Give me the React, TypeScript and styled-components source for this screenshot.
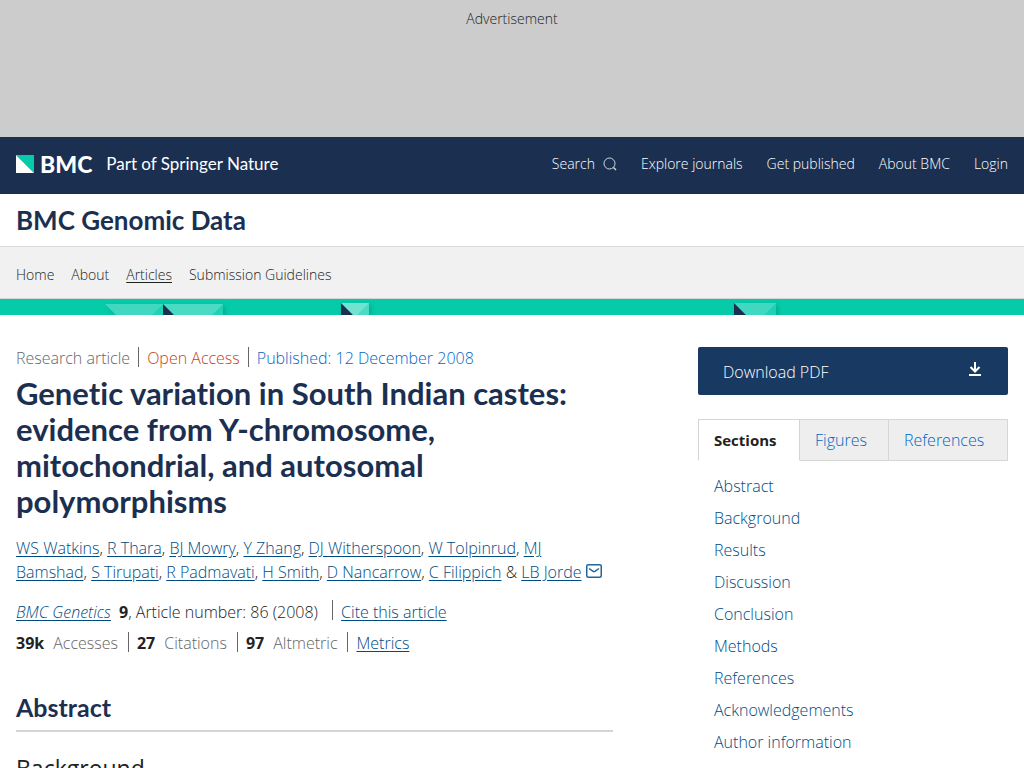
import React from "react";
import styled, { createGlobalStyle } from "styled-components";

const GlobalStyle = createGlobalStyle`
  *, *::before, *::after { box-sizing: border-box; }
  body {
    margin: 0;
    background: #fff;
    color: #222;
    font-family: "Open Sans", "Noto Sans", sans-serif;
    font-weight: 300;
    font-size: 16px;
    line-height: 24px;
  }
  b { font-weight: 700; }
  h1, h2, h3, p, ul { margin: 0; padding: 0; }
  ul { list-style: none; }
`;

const headingFont = `Lato, "Open Sans", sans-serif`;

const Page = styled.div`
  height: 100vh;
  overflow: hidden;
`;

const Advert = styled.aside`
  height: 137px;
  padding-top: 7px;
  background: #ccc;
  text-align: center;
  font-size: 14px;
`;

const Header = styled.header`
  display: flex;
  align-items: center;
  justify-content: space-between;
  height: 57px;
  padding: 0 16px 4px;
  background: #1b3051;
`;

const Brand = styled.a`
  display: flex;
  align-items: center;
  color: #fff;
  font-family: ${headingFont};
  text-decoration: none;
`;

const BrandName = styled.span`
  margin: 0 14px 0 6px;
  font-size: 23px;
  font-weight: 900;
`;

const BrandNote = styled.span`
  font-size: 17px;
  font-weight: 400;
`;

const LinkRow = styled.ul<{ $gap: number }>`
  display: flex;
  gap: ${(p) => p.$gap}px;
  font-size: 14px;
`;

const BarLink = styled.a<{ $dark?: boolean; $current?: boolean }>`
  display: flex;
  align-items: center;
  gap: 8px;
  color: ${(p) => (p.$dark ? "#fff" : "#222")};
  text-decoration: ${(p) => (p.$current ? "underline" : "none")};
  text-underline-offset: 2px;
`;

const JournalBar = styled.div`
  height: 53px;
  padding: 10px 16px;
  border-bottom: 1px solid #d9d9d9;
`;

const JournalTitle = styled.p`
  color: #1b3051;
  font: 700 26px/32px ${headingFont};
`;

const JournalNav = styled.nav`
  height: 52px;
  padding: 16px 16px 0;
  background: #f1f1f1;
  border-bottom: 1px solid #d5d5d5;
`;

const Pattern = styled.div`
  height: 16px;
  overflow: hidden;
  background: #05cba9;

  svg { display: block; }
`;

const Content = styled.div`
  display: grid;
  grid-template-columns: minmax(0, 1fr) 310px;
  column-gap: 85px;
  padding: 32px 16px;
`;

const DividedList = styled.ul<{ $gap: number }>`
  display: flex;
  height: 20px;
  color: #666;
  line-height: 22px;

  li + li {
    margin-left: ${(p) => p.$gap}px;
    padding-left: 8px;
    border-left: 1px solid #666;
  }
`;

const Tinted = styled.span<{ $color: string }>`
  color: ${(p) => p.$color};
`;

const PlainLink = styled.a`
  color: #0067c5;
  text-decoration: none;
`;

const Title = styled.h1`
  margin: 8px 0 17px;
  color: #1b3051;
  font: 700 31px/36px ${headingFont};
  font-variant-ligatures: none;
`;

const TextLink = styled.a`
  color: #004b83;
  text-decoration: underline;
  text-underline-offset: 2px;

  svg { margin-left: 4px; }
`;

const Authors = styled.p`
  margin-bottom: 16px;
`;

const Citation = styled.p`
  margin-bottom: 8px;

  b { margin-left: 4px; }
`;

const Cite = styled.span`
  display: inline-block;
  height: 20px;
  margin-left: 10px;
  padding-left: 8px;
  border-left: 1px solid #666;
  line-height: 24px;
  vertical-align: top;
`;

const Metrics = styled(DividedList)`
  b {
    margin-right: 9px;
    color: #222;
  }
`;

const SectionTitle = styled.h2`
  margin: 40px 0 22px;
  padding-bottom: 8px;
  border-bottom: 2px solid #d5d5d5;
  color: #1b3051;
  font: 700 25px/30px ${headingFont};
`;

const SubTitle = styled.h3`
  font-size: 23px;
  font-weight: 400;
  line-height: 28px;
`;

const Download = styled.a`
  display: flex;
  align-items: center;
  justify-content: space-between;
  height: 48px;
  margin-bottom: 24px;
  padding: 2px 25px 0;
  border-radius: 2px;
  background: #183962;
  color: #fff;
  text-decoration: none;

  svg { margin-bottom: 6px; }
`;

const Tabs = styled.div`
  display: grid;
  grid-template-columns: 102px 89px 1fr;
  height: 42px;
  margin-bottom: 13px;
`;

const Tab = styled.button<{ $active?: boolean }>`
  padding: 0 15px;
  border: 1px solid #d5d5d5;
  border-left-width: ${(p) => (p.$active ? "1px" : "0")};
  border-bottom-color: ${(p) => (p.$active ? "#fff" : "#d5d5d5")};
  background: ${(p) => (p.$active ? "#fff" : "#eee")};
  color: ${(p) => (p.$active ? "#222" : "#0067c5")};
  font: inherit;
  font-size: ${(p) => (p.$active ? 15 : 16)}px;
  font-weight: ${(p) => (p.$active ? 700 : 300)};
  text-align: left;
`;

const Contents = styled.ul`
  padding-left: 16px;

  li { height: 32px; }
`;

const ContentsLink = styled.a`
  color: #004b83;
  text-decoration: none;
`;

const authors = [
  "WS Watkins", "R Thara", "BJ Mowry", "Y Zhang", "DJ Witherspoon", "W Tolpinrud", "MJ Bamshad",
  "S Tirupati", "R Padmavati", "H Smith", "D Nancarrow", "C Filippich",
];

const sections = [
  "Abstract", "Background", "Results", "Discussion", "Conclusion", "Methods", "References",
  "Acknowledgements", "Author information",
];

const journalPages = ["Home", "About", "Articles", "Submission Guidelines"];
const siteLinks = ["Explore journals", "Get published", "About BMC", "Login"];

const BrandMark = () => (
  <svg width="18" height="18" viewBox="0 0 18 18" aria-hidden="true">
    <path fill="#05cba9" d="M0 0h18v18z" />
    <path fill="#fff" d="M0 0v18h18z" />
  </svg>
);

const SearchIcon = () => (
  <svg width="14" height="14" viewBox="0 0 14 14" fill="none" stroke="#d5dae2" aria-hidden="true">
    <circle cx="6.5" cy="6.5" r="5.5" />
    <path d="M10.5 10.5 13 13" strokeWidth="1.4" />
  </svg>
);

const MailIcon = () => (
  <svg width="16" height="14" viewBox="0 0 16 14" fill="none" stroke="#22659a" strokeWidth="1.5" aria-hidden="true">
    <rect x="0.75" y="0.75" width="14.5" height="12.5" rx="1.5" />
    <path d="M3 4.5 6.8 7.2q1.2.8 2.4 0L13 4.5" />
  </svg>
);

const DownloadIcon = () => (
  <svg width="16" height="16" viewBox="0 0 16 16" fill="none" stroke="#fff" strokeWidth="2" aria-hidden="true">
    <path d="M8 1v9M3.5 6 8 10.5 12.5 6M2 14h12" />
  </svg>
);

const Triangles = () => (
  <svg width="1024" height="16" viewBox="0 0 1024 16" aria-hidden="true">
    <defs>
      <filter id="shade" x="-20%" y="-50%" width="140%" height="200%">
        <feDropShadow dx="2" dy="2" stdDeviation="2" floodColor="#036b5a" floodOpacity="0.35" />
      </filter>
    </defs>
    <g filter="url(#shade)">
      <path fill="#40d8c0" d="M105 5h58v12h-46z" />
      <path fill="#4bdbc4" d="M163 5h60v12h-60z" />
      <path fill="#70e3d1" d="M341 4h28v12h-28z" />
      <path fill="#40d8c0" d="M734 4h42v12h-42z" />
    </g>
    <path fill="#21d1b3" d="M163 5v11h-11z" />
    <path fill="#21d1b3" d="M223 5v11h-11z" />
    <path fill="#4bdbc4" d="M369 4v12h-12z" />
    <path fill="#21d1b3" d="M776 4v12h-12z" />
    <path fill="#1b3051" d="M163 5v11h11zM341 4v12h12zM734 4v12h12z" />
  </svg>
);

export default function App() {
  return (
    <Page>
      <GlobalStyle />
      <Advert>Advertisement</Advert>
      <Header>
        <Brand href="#">
          <BrandMark />
          <BrandName>BMC</BrandName>
          <BrandNote>Part of Springer Nature</BrandNote>
        </Brand>
        <nav aria-label="Site">
          <LinkRow $gap={24}>
            <li><BarLink $dark href="#">Search <SearchIcon /></BarLink></li>
            {siteLinks.map((label) => (
              <li key={label}><BarLink $dark href="#">{label}</BarLink></li>
            ))}
          </LinkRow>
        </nav>
      </Header>
      <JournalBar>
        <JournalTitle>BMC Genomic Data</JournalTitle>
      </JournalBar>
      <JournalNav aria-label="Journal">
        <LinkRow $gap={17}>
          {journalPages.map((label) => (
            <li key={label}><BarLink href="#" $current={label === "Articles"}>{label}</BarLink></li>
          ))}
        </LinkRow>
      </JournalNav>
      <Pattern><Triangles /></Pattern>
      <Content>
        <main>
          <DividedList $gap={8}>
            <li>Research article</li>
            <li><Tinted $color="#c74413">Open Access</Tinted></li>
            <li><PlainLink href="#">Published: 12 December 2008</PlainLink></li>
          </DividedList>
          <Title>
            Genetic variation in South Indian castes: evidence from Y-chromosome, mitochondrial, and
            autosomal polymorphisms
          </Title>
          <Authors>
            {authors.map((name, i) => (
              <React.Fragment key={name}>
                <TextLink href="#">{name}</TextLink>
                {i < authors.length - 1 ? ", " : " & "}
              </React.Fragment>
            ))}
            <TextLink href="#">LB Jorde</TextLink>
            <TextLink href="#" aria-label="Email LB Jorde"><MailIcon /></TextLink>
          </Authors>
          <Citation>
            <TextLink href="#"><i>BMC Genetics</i></TextLink> <b>9</b>, Article number: 86 (2008){" "}
            <Cite><TextLink href="#">Cite this article</TextLink></Cite>
          </Citation>
          <Metrics $gap={10}>
            <li><b>39k</b>Accesses</li>
            <li><b>27</b>Citations</li>
            <li><b>97</b>Altmetric</li>
            <li><TextLink href="#">Metrics</TextLink></li>
          </Metrics>
          <SectionTitle>Abstract</SectionTitle>
          <SubTitle>Background</SubTitle>
        </main>
        <aside>
          <Download href="#">Download PDF <DownloadIcon /></Download>
          <Tabs role="tablist">
            <Tab role="tab" aria-selected="true" $active>Sections</Tab>
            <Tab role="tab" aria-selected="false">Figures</Tab>
            <Tab role="tab" aria-selected="false">References</Tab>
          </Tabs>
          <Contents>
            {sections.map((label) => (
              <li key={label}><ContentsLink href="#">{label}</ContentsLink></li>
            ))}
          </Contents>
        </aside>
      </Content>
    </Page>
  );
}
